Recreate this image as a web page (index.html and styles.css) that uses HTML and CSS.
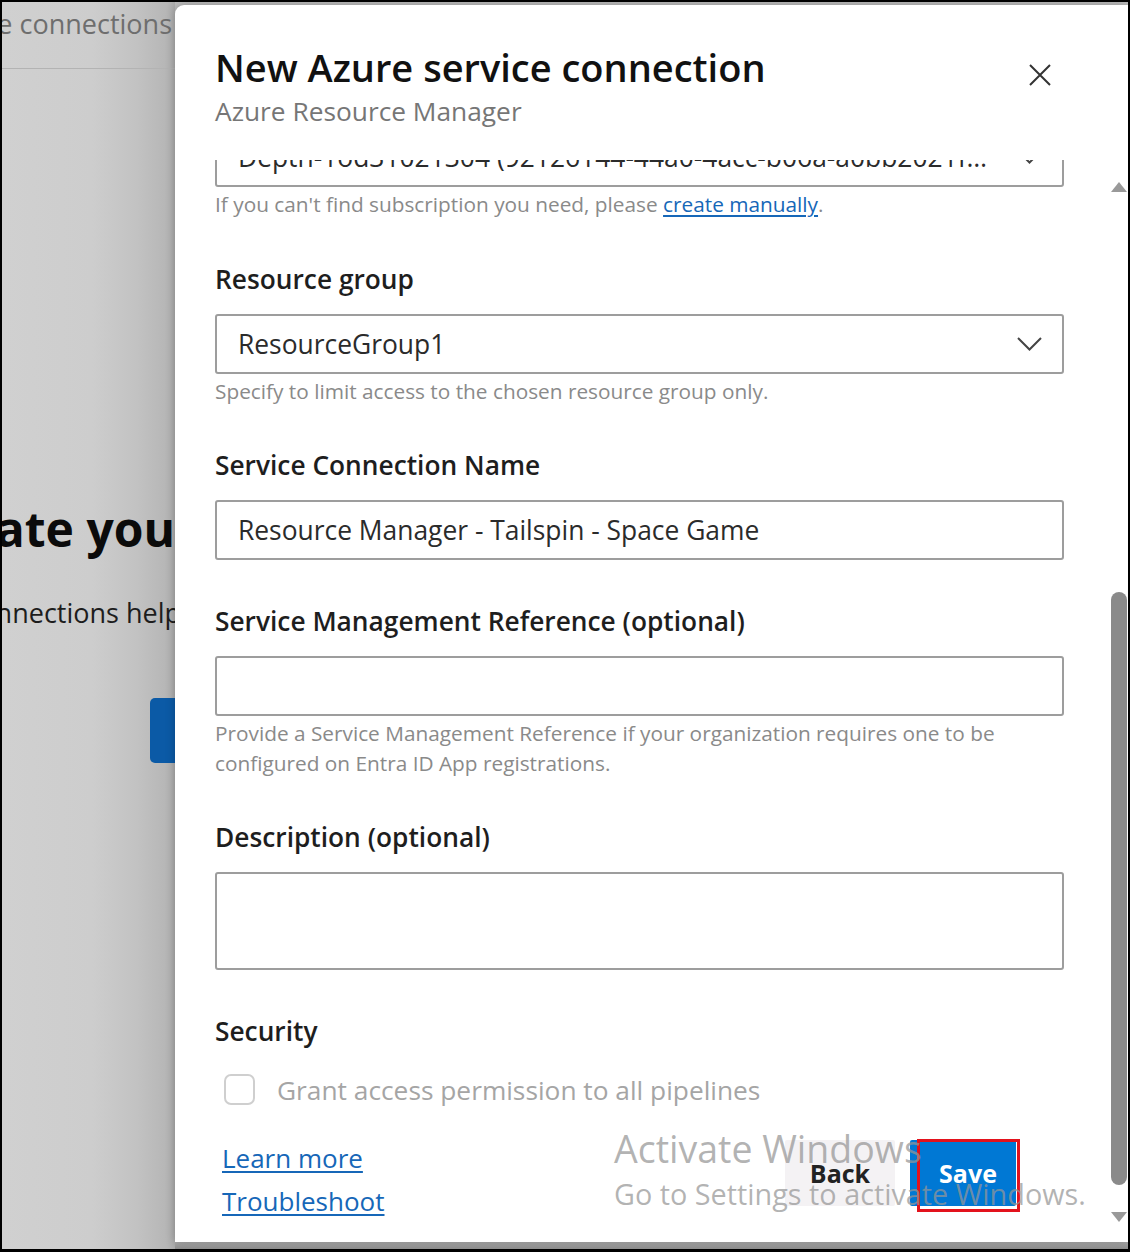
FILE: index.html
```html
<!DOCTYPE html>
<html lang="en">
<head>
<meta charset="utf-8">
<title>New Azure service connection</title>
<link rel="stylesheet" href="styles.css">
</head>
<body>
<div class="screen">
  <div class="bg">
    <div class="bg-head"><span>Service connections</span></div>
    <div class="bg-hero"><span>Create you</span></div>
    <div class="bg-sub"><span>Service connections help</span></div>
    <div class="bg-btn"></div>
  </div>

  <div class="panel">
    <div class="panel-main">
      <header class="panel-head">
        <div class="titles">
          <h1 class="title">New Azure service connection</h1>
          <div class="subtitle">Azure Resource Manager</div>
        </div>
        <button class="close" aria-label="Close">
          <svg width="24" height="24" viewBox="0 0 24 24"><path d="M2 2 L22 22 M22 2 L2 22" stroke="#333" stroke-width="2" fill="none"/></svg>
        </button>
      </header>

      <div class="scroll">
        <div class="scroll-inner">
          <div class="field first">
            <div class="box select">
              <span class="val">Depth-1od31021304 (92126144-44a0-4acc-b06a-a0bb2021f…</span>
              <svg class="chev" width="25" height="14" viewBox="0 0 25 14"><path d="M1 1 L12.5 12.5 L24 1" stroke="#444" stroke-width="2" fill="none"/></svg>
            </div>
            <div class="hint">If you can't find subscription you need, please <a class="link" href="#">create manually</a>.</div>
          </div>

          <div class="field with-hint">
            <div class="label">Resource group</div>
            <div class="box select">
              <span class="val">ResourceGroup1</span>
              <svg class="chev" width="25" height="14" viewBox="0 0 25 14"><path d="M1 1 L12.5 12.5 L24 1" stroke="#444" stroke-width="2" fill="none"/></svg>
            </div>
            <div class="hint">Specify to limit access to the chosen resource group only.</div>
          </div>

          <div class="field">
            <div class="label">Service Connection Name</div>
            <div class="box"><span class="val">Resource Manager - Tailspin - Space Game</span></div>
          </div>

          <div class="field with-hint">
            <div class="label">Service Management Reference (optional)</div>
            <div class="box"></div>
            <div class="hint">Provide a Service Management Reference if your organization requires one to be configured on Entra ID App registrations.</div>
          </div>

          <div class="field">
            <div class="label">Description (optional)</div>
            <div class="box area"></div>
          </div>

          <div class="field last">
            <div class="label">Security</div>
            <div class="check-row">
              <span class="checkbox"></span>
              <span class="check-label">Grant access permission to all pipelines</span>
            </div>
          </div>
        </div>
      </div>

      <footer class="panel-foot">
        <div class="links">
          <a class="link" href="#">Learn more</a>
          <a class="link" href="#">Troubleshoot</a>
        </div>
        <div class="buttons">
          <button class="btn back">Back</button>
          <button class="btn save">Save</button>
        </div>
      </footer>
    </div>

    <div class="scrollbar">
      <span class="arrow up"></span>
      <div class="track"><div class="thumb"></div></div>
      <span class="arrow down"></span>
    </div>
  </div>

  <div class="watermark">
    <div class="wm1">Activate Windows</div>
    <div class="wm2">Go to Settings to activate Windows.</div>
  </div>
</div>
</body>
</html>
```

FILE: styles.css
```css
html, body {
  margin: 0;
  padding: 0;
  background: #000;
}

.screen {
  position: relative;
  width: 1130px;
  height: 1252px;
  box-sizing: border-box;
  border: 2px solid #000;
  border-bottom-width: 3px;
  background: linear-gradient(to bottom, #bdbdbd 0, #bdbdbd 1236px, #8e8e8e 1247px);
  overflow: hidden;
  font-family: "Open Sans", "Noto Sans", sans-serif;
}

/* ---------- background page ---------- */
.bg {
  width: 173px;
  height: 100%;
  overflow: hidden;
  display: flex;
  flex-direction: column;
  background: linear-gradient(to right, #d0d0d0 0, #cdcdcd 90px, #c2c2c2 135px, #b6b6b6 165px, #acacac 173px);
}

.bg-head,
.bg-hero,
.bg-sub {
  display: flex;
  justify-content: flex-end;
  white-space: nowrap;
}

.bg-head span,
.bg-hero span,
.bg-sub span {
  flex-shrink: 0;
}

.bg-head {
  height: 67px;
  border-bottom: 1px solid #b3b3b3;
  padding-top: 3px;
  padding-right: 3px;
  box-sizing: border-box;
  font-size: 27px;
  line-height: 38px;
  color: #6e6e6e;
}

.bg-hero {
  margin-top: 429px;
  font-size: 48px;
  line-height: 62px;
  font-weight: 700;
  color: #0b0b0b;
}

.bg-sub {
  margin-top: 34px;
  font-size: 27px;
  line-height: 38px;
  color: #1d1d1d;
}

.bg-sub span {
  margin-right: -6px;
}

.bg-btn {
  margin-top: 66px;
  margin-left: 148px;
  width: 40px;
  height: 65px;
  border-radius: 5px;
  background: #0b5aa6;
}

/* ---------- panel ---------- */
.panel {
  position: absolute;
  left: 173px;
  top: 3px;
  right: 0;
  bottom: 7px;
  background: #fff;
  border-radius: 9px 0 0 0;
  box-shadow: 0 0 10px rgba(0, 0, 0, 0.25);
  display: grid;
  grid-template-columns: 1fr 18px;
}

.panel-main {
  display: flex;
  flex-direction: column;
  min-height: 0;
  min-width: 0;
}

.panel-head {
  height: 155px;
  flex-shrink: 0;
  box-sizing: border-box;
  padding: 39px 58px 0 40px;
  display: flex;
  justify-content: space-between;
  align-items: flex-start;
}

.title {
  margin: 0;
  font-size: 38px;
  line-height: 46px;
  font-weight: 600;
  color: #111;
}

.subtitle {
  margin-top: 4px;
  font-size: 26.3px;
  line-height: 34px;
  color: #767676;
}

.close {
  margin-top: 19px;
  width: 24px;
  height: 24px;
  padding: 0;
  border: 0;
  background: none;
  display: flex;
}

/* ---------- scroll area ---------- */
.scroll {
  flex: 1;
  min-height: 0;
  overflow: hidden;
}

.scroll-inner {
  padding: 0 46px 0 40px;
}

.field {
  margin-bottom: 44px;
}

.field.with-hint {
  margin-bottom: 42px;
}

.field.first {
  margin-top: -33px;
  margin-bottom: 43px;
}

.field.last {
  margin-bottom: 0;
}

.label {
  font-size: 26.3px;
  line-height: 34px;
  font-weight: 600;
  color: #1e1e1e;
  margin-bottom: 18px;
}

.box {
  height: 60px;
  box-sizing: border-box;
  border: 2px solid #9d9d9d;
  border-radius: 3px;
  padding: 0 20px 0 21px;
  display: flex;
  align-items: center;
  font-size: 26.4px;
  color: #2b2b2b;
  background: #fff;
}

.box.area {
  height: 98px;
}

.val {
  flex: 1;
  min-width: 0;
  white-space: nowrap;
  overflow: hidden;
}

.chev {
  flex-shrink: 0;
  margin-left: 16px;
}

.hint {
  margin-top: 2px;
  font-size: 20.8px;
  line-height: 30px;
  color: #8a8a8a;
}

.link {
  color: #1667b8;
  text-decoration: underline;
  text-underline-offset: 3px;
}

.check-row {
  height: 47px;
  display: flex;
  align-items: center;
}

.checkbox {
  width: 31px;
  height: 31px;
  box-sizing: border-box;
  border: 2px solid #cfcfcf;
  border-radius: 7px;
  margin-left: 9px;
  flex-shrink: 0;
}

.check-label {
  margin-left: 22px;
  font-size: 26.3px;
  color: #a5a5a5;
}

/* ---------- footer ---------- */
.panel-foot {
  height: 117px;
  flex-shrink: 0;
  box-sizing: border-box;
  padding: 15px 94px 0 47px;
  display: flex;
  justify-content: space-between;
  align-items: flex-start;
}

.links {
  margin-top: -3px;
  display: flex;
  flex-direction: column;
  align-items: flex-start;
  font-size: 26px;
  line-height: 43px;
}

.buttons {
  display: flex;
  gap: 15px;
}

.btn {
  height: 66px;
  border: 0;
  border-radius: 2px;
  font-family: inherit;
  font-size: 25px;
  font-weight: 700;
  padding: 0;
}

.back {
  width: 110px;
  background: #f4f2f4;
  color: #222;
}

.save {
  position: relative;
  width: 106px;
  background: #0078d4;
  color: #fff;
  padding-left: 10px;
}

.save::after {
  content: "";
  position: absolute;
  left: 7px;
  right: -4px;
  top: -1px;
  bottom: -6px;
  border: 3.5px solid #e3121c;
}

/* ---------- scrollbar ---------- */
.scrollbar {
  display: flex;
  flex-direction: column;
  align-items: center;
  padding: 177px 0 20px;
  box-sizing: border-box;
  height: 100%;
}

.arrow {
  width: 0;
  height: 0;
  border-left: 8px solid transparent;
  border-right: 8px solid transparent;
  flex-shrink: 0;
}

.arrow.up {
  border-bottom: 10px solid #999;
}

.arrow.down {
  border-top: 10px solid #999;
}

.track {
  flex: 1;
  width: 100%;
  display: flex;
  flex-direction: column;
  align-items: center;
}

.thumb {
  margin-top: 400px;
  width: 16px;
  height: 593px;
  border-radius: 8px;
  background: #8a8a8a;
}

/* ---------- windows watermark ---------- */
.watermark {
  position: absolute;
  left: 612px;
  top: 1124px;
  color: rgba(150, 150, 150, 0.72);
  white-space: nowrap;
  pointer-events: none;
}

.wm1 {
  font-size: 37.5px;
  line-height: 46px;
}

.wm2 {
  margin-top: 4px;
  font-size: 28.8px;
  line-height: 36px;
}
```
